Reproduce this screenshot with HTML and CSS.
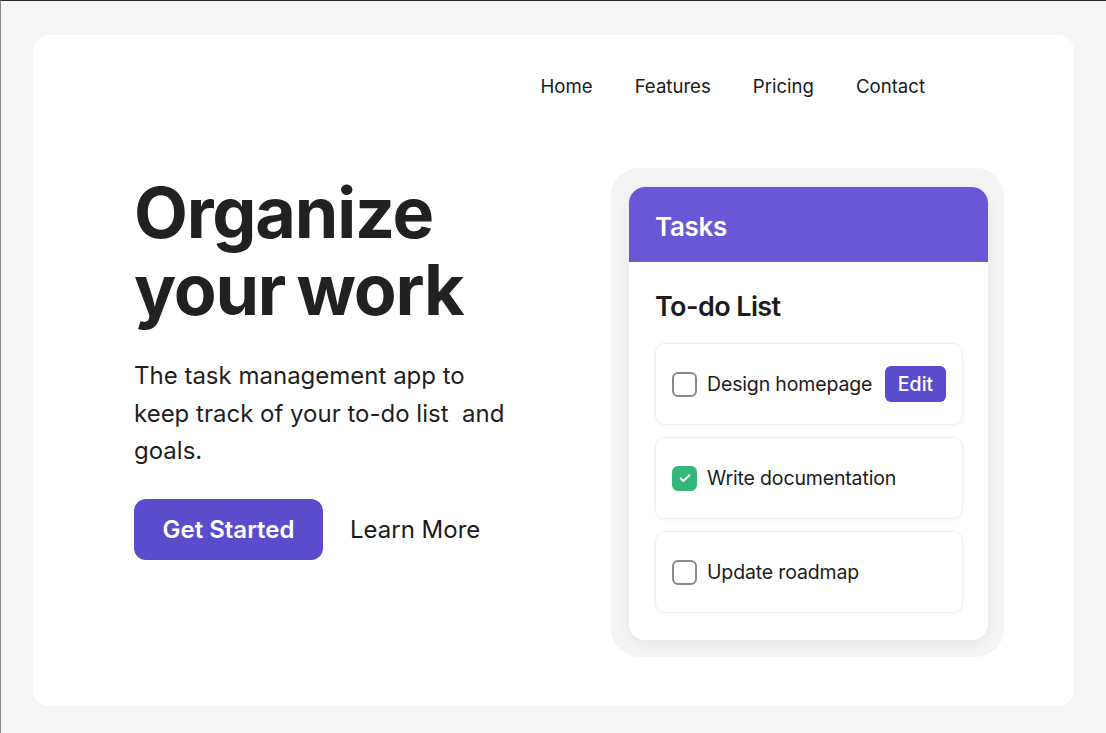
FILE: index.html
```html
<!DOCTYPE html>
<html lang="en">
<head>
<meta charset="utf-8">
<title>Organize your work</title>
<link rel="stylesheet" href="styles.css">
</head>
<body>
<main class="page">
  <div class="sheet">
    <nav class="nav">
      <a href="#">Home</a>
      <a href="#">Features</a>
      <a href="#">Pricing</a>
      <a href="#">Contact</a>
    </nav>
    <section class="hero">
      <div class="hero-text">
        <h1 class="title">Organize<br>your work</h1>
        <p class="lead">The task management app to keep track of your to-do list&nbsp; and goals.</p>
        <div class="actions">
          <a class="btn-primary" href="#">Get Started</a>
          <a class="btn-link" href="#">Learn More</a>
        </div>
      </div>
      <div class="preview">
        <div class="tasks-card">
          <div class="tasks-head">Tasks</div>
          <div class="tasks-body">
            <h2 class="list-title">To-do List</h2>
            <ul class="items">
              <li class="item">
                <span class="check"></span>
                <span class="label">Design homepage</span>
                <span class="edit">Edit</span>
              </li>
              <li class="item">
                <span class="check done"><svg viewBox="0 0 24 24" width="16" height="16"><path d="M5.5 12.5l4 4L18.5 8" fill="none" stroke="#fff" stroke-width="3" stroke-linecap="round" stroke-linejoin="round"/></svg></span>
                <span class="label">Write documentation</span>
              </li>
              <li class="item">
                <span class="check"></span>
                <span class="label">Update roadmap</span>
              </li>
            </ul>
          </div>
        </div>
      </div>
    </section>
  </div>
</main>
</body>
</html>
```

FILE: styles.css
```css
* { box-sizing: border-box; }
html, body { margin: 0; padding: 0; }
body {
  background: #f6f6f6;
  font-family: Inter, "Noto Sans", sans-serif;
  color: #1f1f1f;
  border-top: 1px solid #2a2a2a;
  border-left: 1px solid #8a8a8a;
  height: 733px;
  overflow: hidden;
}
.page {
  padding: 34px 32px 27px 32px;
  height: 732px;
}
.sheet {
  background: #fff;
  border-radius: 16px;
  height: 100%;
  padding: 0 70px 0 101px;
}
.nav {
  display: flex;
  justify-content: flex-end;
  gap: 42px;
  padding-top: 39px;
  margin-right: 79px;
}
.nav a {
  color: #1a1a1a;
  text-decoration: none;
  font-size: 18.6px;
  line-height: 24px;
}
.hero {
  display: flex;
  justify-content: space-between;
  align-items: flex-start;
  margin-top: 70px;
}
.hero-text { padding-top: 6px; }
.title {
  margin: 0;
  font-size: 70px;
  line-height: 77px;
  font-weight: 700;
  letter-spacing: -1.2px;
  word-spacing: -4px;
  color: #212121;
}
.lead {
  margin: 29px 0 0;
  width: 380px;
  font-size: 24px;
  line-height: 37.5px;
  color: #1f1f1f;
}
.actions {
  display: flex;
  align-items: center;
  gap: 27px;
  margin-top: 29px;
}
.btn-primary {
  display: inline-flex;
  align-items: center;
  justify-content: center;
  width: 189px;
  height: 61px;
  border-radius: 12px;
  background: #5b4ccb;
  color: #fff;
  font-size: 24px;
  font-weight: 600;
  text-decoration: none;
}
.btn-link {
  color: #1a1a1a;
  font-size: 24px;
  text-decoration: none;
}
.preview {
  background: #f4f4f4;
  border-radius: 28px;
  padding: 19px 16px 17px 18px;
  width: 393px;
}
.tasks-card {
  background: #fff;
  border-radius: 16px;
  overflow: hidden;
  box-shadow: 0 4px 14px rgba(0, 0, 0, 0.06);
}
.tasks-head {
  background: #6957d6;
  color: #fff;
  height: 75px;
  display: flex;
  align-items: center;
  padding: 3px 0 0 26px;
  font-size: 26px;
  font-weight: 600;
  letter-spacing: -0.3px;
}
.tasks-body {
  padding: 28px 25px 27px 26px;
}
.list-title {
  margin: 0 0 19px;
  font-size: 27px;
  line-height: 34px;
  font-weight: 600;
  letter-spacing: -0.6px;
  color: #1c1c1c;
}
.items {
  list-style: none;
  margin: 0;
  padding: 0;
  display: flex;
  flex-direction: column;
  gap: 12px;
}
.item {
  height: 82px;
  border: 1px solid #efefef;
  border-radius: 10px;
  box-shadow: 0 1px 4px rgba(0, 0, 0, 0.04);
  display: flex;
  align-items: center;
  padding: 0 16px;
  gap: 10px;
}
.check {
  width: 25px;
  height: 25px;
  border: 2.5px solid #8a8a8a;
  border-radius: 6px;
  flex: none;
  display: flex;
  align-items: center;
  justify-content: center;
}
.check.done {
  background: #33b77b;
  border-color: #33b77b;
}
.label {
  font-size: 19.5px;
  color: #1c1c1c;
  letter-spacing: -0.15px;
  white-space: nowrap;
}
.edit {
  margin-left: auto;
  flex: none;
  width: 61px;
  height: 36px;
  border-radius: 6px;
  background: #5b4ccb;
  color: #fff;
  font-size: 19.5px;
  font-weight: 500;
  display: flex;
  align-items: center;
  justify-content: center;
}
```
